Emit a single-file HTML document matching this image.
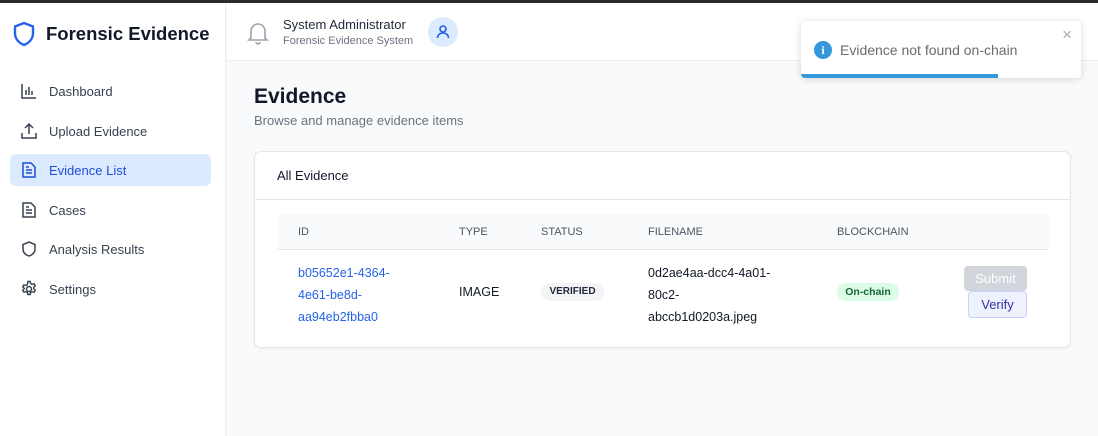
<!DOCTYPE html>
<html><head><style>
*{box-sizing:border-box;margin:0;padding:0}
body{width:1098px;height:436px;overflow:hidden;font-family:"Liberation Sans",sans-serif;background:#f9fafb;position:relative}
.topbar{position:absolute;left:0;top:0;width:1098px;height:3px;background:#2b2b2b}
.side{position:absolute;left:0;top:3px;width:226px;height:433px;background:#fff;border-right:1px solid #eceef1}
.logo{position:absolute;left:12px;top:18px;display:flex;align-items:center}
.logo span{font-size:18.5px;font-weight:bold;color:#111827;margin-left:10px}
.nav{position:absolute;left:10px;width:201px;height:32px;border-radius:6px;display:flex;align-items:center;padding-left:10px;font-size:13px;color:#374151}
.nav svg{margin-right:11px}
.nav.act{background:#dbeafe;color:#1d4ed8}
.header{position:absolute;left:227px;top:3px;width:871px;height:58px;background:#fff;border-bottom:1px solid #eceef1}
.card{position:absolute;left:254px;top:151px;width:817px;height:197px;background:#fff;border:1px solid #e5e7eb;border-radius:7px;box-shadow:0 1px 2px rgba(0,0,0,.05)}
.th{position:absolute;top:226px;font-size:11px;color:#4b5563}
.td{position:absolute;font-size:12.5px;color:#111827;line-height:22px}
</style></head><body>
<div class="topbar"></div>
<div class="side">
<div class="logo"><svg width="24" height="26" viewBox="0 0 24 26"><path d="M12 2 L21 5.5 V12 C21 18 17 22 12 24 C7 22 3 18 3 12 V5.5 Z" fill="none" stroke="#2563eb" stroke-width="2.4" stroke-linejoin="round"/></svg><span>Forensic Evidence</span></div>
<div class="nav" style="top:72px"><svg width="18" height="18" viewBox="0 0 18 18" fill="none" stroke="#374151" stroke-width="1.5"><path d="M2 2v14h14M6 13V8M9 13V5M12 13V9"/></svg>Dashboard</div>
<div class="nav" style="top:112px"><svg width="18" height="18" viewBox="0 0 18 18" fill="none" stroke="#374151" stroke-width="1.5"><path d="M2 11v5h14v-5M9 12V2M5 6l4-4 4 4"/></svg>Upload Evidence</div>
<div class="nav act" style="top:151px"><svg width="18" height="18" viewBox="0 0 18 18" fill="none" stroke="#1d4ed8" stroke-width="1.5"><path d="M3 2h8l4 4v10H3zM6 9h6M6 12h6M6 6h3"/></svg>Evidence List</div>
<div class="nav" style="top:191px"><svg width="18" height="18" viewBox="0 0 18 18" fill="none" stroke="#374151" stroke-width="1.5"><path d="M3 2h8l4 4v10H3zM6 9h6M6 12h6M6 6h3"/></svg>Cases</div>
<div class="nav" style="top:230px"><svg width="18" height="18" viewBox="0 0 18 18" fill="none" stroke="#374151" stroke-width="1.5"><path d="M9 2l6 2.5V9c0 4-3 6-6 7-3-1-6-3-6-7V4.5z"/></svg>Analysis Results</div>
<div class="nav" style="top:270px"><svg width="18" height="18" viewBox="0 0 18 18" fill="none" stroke="#374151" stroke-width="1.4"><circle cx="9" cy="9" r="2.5"/><path d="M7.8 1.5h2.4l.4 2 1.6.9 1.9-.7 1.2 2.1-1.5 1.3v1.8l1.5 1.3-1.2 2.1-1.9-.7-1.6.9-.4 2H7.8l-.4-2-1.6-.9-1.9.7-1.2-2.1 1.5-1.3V8.2L2.7 6.9l1.2-2.1 1.9.7 1.6-.9z"/></svg>Settings</div>
</div>
<div class="header">
<svg style="position:absolute;left:20px;top:18px" width="22" height="24" viewBox="0 0 22 24" fill="none" stroke="#9ca3af" stroke-width="1.6"><path d="M4 17V10a7 7 0 0 1 14 0v7l2 2H2zM9 21a2 2 0 0 0 4 0"/></svg>
<div style="position:absolute;left:56px;top:14px;font-size:13px;color:#1f2937">System Administrator</div>
<div style="position:absolute;left:56px;top:32px;font-size:11px;color:#6b7280">Forensic Evidence System</div>
<div style="position:absolute;left:201px;top:14px;width:30px;height:30px;border-radius:50%;background:#dbeafe"><svg width="30" height="30" viewBox="0 0 30 30" fill="none" stroke="#2563eb" stroke-width="1.6"><circle cx="15" cy="12" r="3"/><path d="M9.5 21c0-3 2.5-5 5.5-5s5.5 2 5.5 5"/></svg></div>
</div>
<div style="position:absolute;left:254px;top:85px;font-size:21px;font-weight:bold;color:#111827">Evidence</div>
<div style="position:absolute;left:254px;top:113px;font-size:13px;color:#6b7280">Browse and manage evidence items</div>
<div class="card">
<div style="position:absolute;left:22px;top:16px;font-size:13px;color:#111827">All Evidence</div>
<div style="position:absolute;left:0;top:47px;width:815px;height:1px;background:#e5e7eb"></div>
<div style="position:absolute;left:22px;top:62px;width:772px;height:36px;background:#f9fafb;border-bottom:1px solid #e5e7eb"></div>
</div>
<div class="th" style="left:298px">ID</div>
<div class="th" style="left:459px">TYPE</div>
<div class="th" style="left:541px">STATUS</div>
<div class="th" style="left:648px">FILENAME</div>
<div class="th" style="left:837px">BLOCKCHAIN</div>
<div class="td" style="left:298px;top:262px;color:#2563eb">b05652e1-4364-<br>4e61-be8d-<br>aa94eb2fbba0</div>
<div class="td" style="left:459px;top:281px">IMAGE</div>
<div style="position:absolute;left:541px;top:283px;width:63px;height:18px;border-radius:9px;background:#f3f4f6;font-size:10px;font-weight:bold;color:#1f2937;text-align:center;line-height:18px">VERIFIED</div>
<div class="td" style="left:648px;top:262px">0d2ae4aa-dcc4-4a01-<br>80c2-<br>abccb1d0203a.jpeg</div>
<div style="position:absolute;left:837px;top:283px;width:62px;height:18px;border-radius:9px;background:#dcfce7;font-size:10.5px;font-weight:bold;color:#166534;text-align:center;line-height:18px">On-chain</div>
<div style="position:absolute;left:964px;top:266px;width:63px;height:25px;border-radius:4px;background:#d1d5db;color:#fff;font-size:13px;text-align:center;line-height:25px">Submit</div>
<div style="position:absolute;left:968px;top:291px;width:59px;height:27px;border-radius:4px;background:#eef2ff;border:1px solid #c7d2fe;color:#3730a3;font-size:13px;text-align:center;line-height:25px">Verify</div>
<div style="position:absolute;left:801px;top:21px;width:280px;height:57px;background:#fff;border-radius:4px;box-shadow:0 1px 8px rgba(0,0,0,.15);overflow:hidden">
<div style="position:absolute;left:13px;top:20px;width:18px;height:18px;border-radius:50%;background:#3498db;color:#fff;font-size:12px;font-weight:bold;text-align:center;line-height:18px;font-family:'Liberation Serif',serif">i</div>
<div style="position:absolute;left:39px;top:21px;font-size:14px;color:#6b6b6b">Evidence not found on-chain</div>
<div style="position:absolute;right:9px;top:4px;font-size:17px;color:#aaa">×</div>
<div style="position:absolute;left:0;bottom:0;width:197px;height:4px;background:#3498db"></div>
</div>
</body></html>
